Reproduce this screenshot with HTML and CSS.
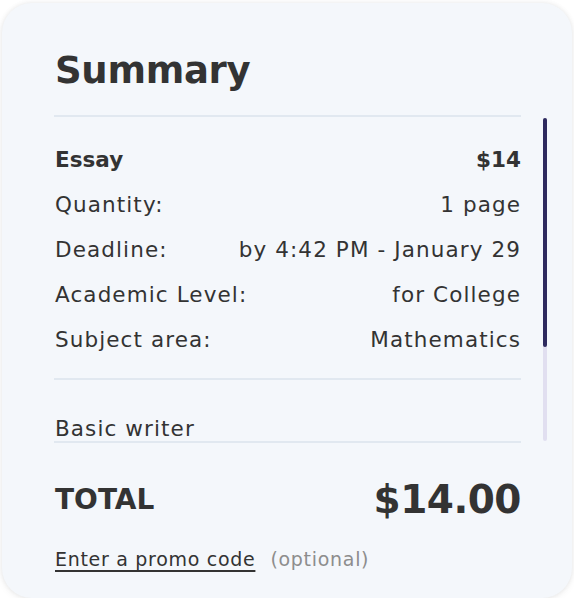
FILE: index.html
```html
<!DOCTYPE html>
<html lang="en">
<head>
<meta charset="utf-8">
<title>Summary</title>
<link rel="stylesheet" href="styles.css">
</head>
<body>
<div class="card">
  <h2 class="title">Summary</h2>
  <div class="scroll-wrap">
    <div class="scroll-content">
      <div class="rows">
        <div class="row strong"><span>Essay</span><span>$14</span></div>
        <div class="row"><span>Quantity:</span><span>1 page</span></div>
        <div class="row"><span>Deadline:</span><span>by 4:42 PM - January 29</span></div>
        <div class="row"><span>Academic Level:</span><span>for College</span></div>
        <div class="row"><span>Subject area:</span><span>Mathematics</span></div>
      </div>
      <div class="extras">
        <div class="row"><span>Basic writer</span><span></span></div>
      </div>
    </div>
    <div class="scrollbar"><div class="thumb"></div></div>
  </div>
  <div class="total"><span class="total-label">TOTAL</span><span class="total-value">$14.00</span></div>
  <div class="promo"><a href="#" class="promo-link">Enter a promo code</a><span class="optional">(optional)</span></div>
</div>
</body>
</html>
```
FILE: styles.css
```css
html, body {
  margin: 0;
  padding: 0;
  background: #ffffff;
}
body {
  font-family: "DejaVu Sans", "Open Sans", sans-serif;
  color: #333333;
}
.card {
  box-sizing: border-box;
  margin: 3px 2px 0 2px;
  height: 595px;
  border-radius: 30px;
  background: #f4f7fb;
  box-shadow: 0 0 5px rgba(0, 0, 0, 0.08), 0 2px 8px rgba(0, 0, 0, 0.05);
  padding: 0 51px 0 52px;
}
.title {
  margin: 0;
  padding-top: 46px;
  height: 66px;
  font-size: 37px;
  line-height: 44px;
  font-weight: 700;
  color: #333333;
  border-bottom: 2px solid #e1e8f0;
  padding-left: 1px;
  letter-spacing: -0.3px;
}
.scroll-wrap {
  display: flex;
  margin-right: -26px;
  height: 326px;
}
.scroll-content {
  flex: 1;
  overflow: hidden;
  border-bottom: 2px solid #e1e8f0;
}
.scrollbar {
  width: 4px;
  margin: 1px 0 2px 22px;
  background: #e1dff0;
  border-radius: 2px;
}
.thumb {
  height: 229px;
  background: #2e2a5e;
  border-radius: 2px;
}
.rows {
  padding: 20px 0 16px 1px;
  border-bottom: 2px solid #e1e8f0;
}
.row {
  display: flex;
  justify-content: space-between;
  font-size: 21.5px;
  line-height: 45px;
  letter-spacing: 1.1px;
}
.strong {
  font-weight: 700;
  letter-spacing: 0;
}
.extras {
  padding: 26px 0 40px 1px;
}
.total {
  display: flex;
  justify-content: space-between;
  align-items: center;
  padding: 31px 0 0 1px;
  height: 50px;
}
.total-label {
  font-size: 28px;
  font-weight: 700;
}
.total-value {
  font-size: 39px;
  font-weight: 700;
  letter-spacing: -0.5px;
}
.promo {
  padding: 24px 0 0 1px;
  font-size: 19px;
  letter-spacing: 0.7px;
}
.promo-link {
  color: #333333;
  text-decoration: underline;
  text-decoration-thickness: 2px;
  text-underline-offset: 4px;
}
.optional {
  color: #8d8d8d;
  margin-left: 15px;
}
```
